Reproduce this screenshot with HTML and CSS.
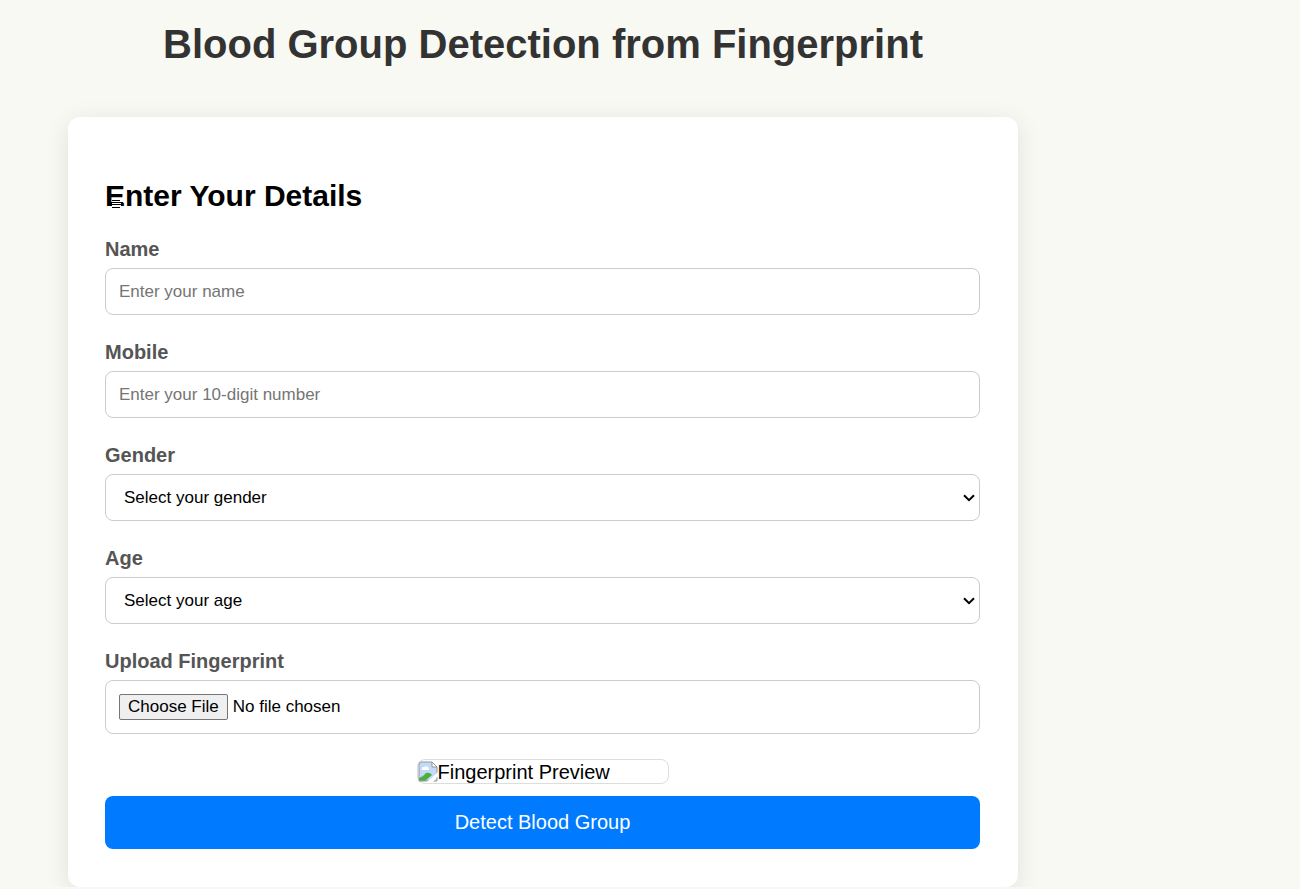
FILE: index.html
```html
<!DOCTYPE html>
<html lang="en">
<head>
<meta charset="utf-8">
<title>Blood Group Detection from Fingerprint</title>
<link rel="stylesheet" href="styles.css">
</head>
<body>
<main class="page">
  <h1 class="page-title">Blood Group Detection from Fingerprint</h1>
  <form class="card">
    <h2 class="card-title">Enter Your Details
      <svg class="cursor" width="12" height="10" viewBox="0 0 12 10" aria-hidden="true"><path d="M1 0h9v10H1z" fill="#fff"/><path d="M1 1.500h8M0 3.500h12M0 5.500h12M1 8.500h8" stroke="#000"/></svg>
    </h2>
    <div class="field">
      <label class="label" for="name">Name</label>
      <input class="control" id="name" type="text" placeholder="Enter your name">
    </div>
    <div class="field">
      <label class="label" for="mobile">Mobile</label>
      <input class="control" id="mobile" type="tel" placeholder="Enter your 10-digit number">
    </div>
    <div class="field">
      <label class="label" for="gender">Gender</label>
      <div class="select-wrap">
        <select class="control select" id="gender"><option>Select your gender</option><option>Male</option><option>Female</option></select>
        <svg class="chevron" width="12" height="8" viewBox="0 0 12 8" aria-hidden="true"><path d="M1 1.200L6 6.200L11 1.200"/></svg>
      </div>
    </div>
    <div class="field">
      <label class="label" for="age">Age</label>
      <div class="select-wrap">
        <select class="control select" id="age"><option>Select your age</option><option>18</option><option>19</option></select>
        <svg class="chevron" width="12" height="8" viewBox="0 0 12 8" aria-hidden="true"><path d="M1 1.200L6 6.200L11 1.200"/></svg>
      </div>
    </div>
    <div class="field">
      <label class="label" for="fingerprint">Upload Fingerprint</label>
      <input class="control file" id="fingerprint" type="file" accept="image/*">
    </div>
    <div class="preview">
      <svg class="preview-icon" width="20" height="22" viewBox="0 0 20 22" aria-hidden="true">
        <path d="M3 1h11l5 5v14H1V3a2 2 0 0 1 2-2z" fill="#c3d9f7"/>
        <path d="M4 9a2 2 0 0 1 2-3a3 3 0 0 1 5 2v1z" fill="#fff"/>
        <path d="M1 20v-3q4-1 7-5q4-1 6 2l-7 6z" fill="#4fae3d"/>
        <path d="M14 1v5h5z" fill="#fff"/>
        <path d="M1 20V3a2 2 0 0 1 2-2h11l5 5v14zM14 1v5h5" fill="none" stroke="#90979d"/>
        <path d="M9 21L20 11v4l-5 6z" fill="#fff"/>
      </svg>
      <span>Fingerprint Preview</span>
    </div>
    <button class="submit" type="button">Detect Blood Group</button>
  </form>
</main>
</body>
</html>
```
FILE: styles.css
```css
* { box-sizing: border-box; }
body {
  margin: 0;
  background: #f8f9f2;
  color: #000;
  font: 20px/24px "Liberation Sans", Arial, sans-serif;
}
.page { max-width: 1086px; padding: 20px 68px 0; }
.page-title {
  margin: 0 0 49px;
  color: #333;
  font-size: 40px;
  line-height: 48px;
  text-align: center;
}
.card {
  padding: 61px 38px 38px 37px;
  border-radius: 12px;
  background: #fff;
  box-shadow: 0 5px 25px rgba(0, 0, 0, 0.1);
}
.card-title {
  position: relative;
  margin: 0 0 23px;
  font-size: 30px;
  line-height: 36px;
}
.cursor { position: absolute; left: 6px; top: 21px; }
.field { margin-bottom: 25px; }
.label {
  display: block;
  margin-bottom: 7px;
  color: #555;
  font-weight: bold;
  line-height: 24px;
}
.control {
  display: block;
  width: 100%;
  height: 47px;
  padding: 0 13px;
  border: 1px solid #ccc;
  border-radius: 8px;
  background: #fff;
  color: #000;
  font: 17px "Liberation Sans", Arial, sans-serif;
}
.control::placeholder { color: #757575; }
.select-wrap { position: relative; }
.select { padding: 0 18px; appearance: none; }
.chevron { position: absolute; right: 5px; top: 20px; pointer-events: none; }
.chevron path { fill: none; stroke: #000; stroke-width: 2; }
.file { height: 54px; padding: 13px; }
.file::file-selector-button {
  height: 26px;
  margin-right: 5px;
  padding: 0 8px;
  border: 1px solid #767676;
  border-radius: 2px;
  background: #efefef;
  color: #000;
  font: inherit;
}
.preview {
  display: flex;
  align-items: center;
  width: 252px;
  max-width: 100%;
  height: 25px;
  margin: 0 auto 12px;
  border: 1px solid #ddd;
  border-radius: 8px;
  line-height: 22px;
}
.submit {
  display: block;
  width: 100%;
  height: 53px;
  padding: 0 0 2px;
  border: 0;
  border-radius: 8px;
  background: #007bff;
  color: #fff;
  font: inherit;
}
```
